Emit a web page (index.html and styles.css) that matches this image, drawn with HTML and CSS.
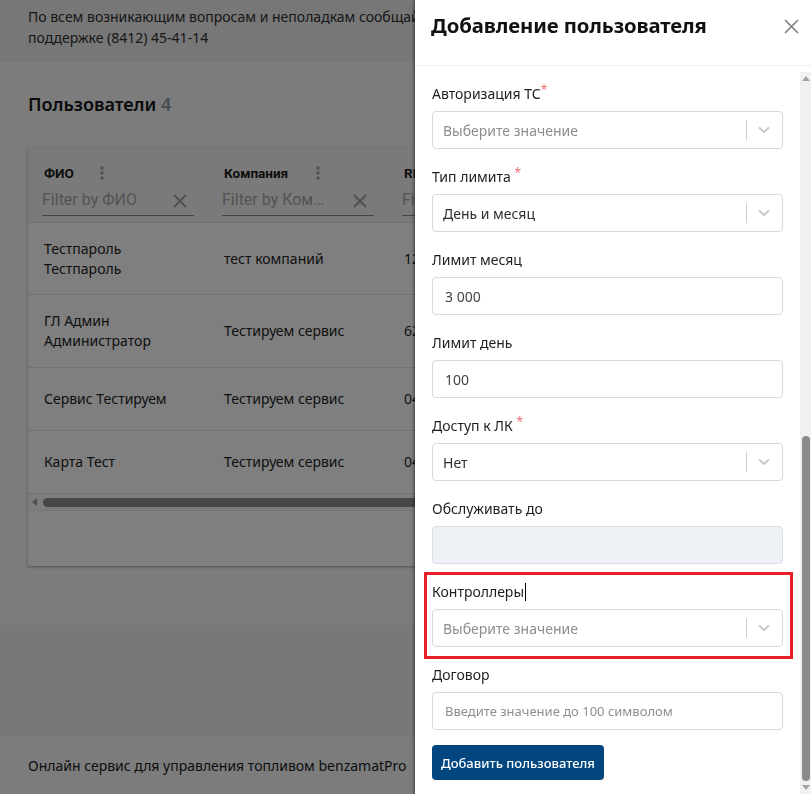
FILE: index.html
```html
<!DOCTYPE html>
<html lang="ru">
<head>
<meta charset="utf-8">
<title>Пользователи</title>
<link rel="stylesheet" href="styles.css">
</head>
<body>
<div class="page">
  <div class="notice">По всем возникающим вопросам и неполадкам сообщайте в службу технической<br>поддержке (8412) 45-41-14</div>
  <main class="main">
    <h2 class="page-title">Пользователи <span class="count">4</span></h2>
    <div class="card">
      <div class="thead">
        <div class="th">
          <div class="th-head"><span class="th-label">ФИО</span><svg class="kebab" width="4" height="14" viewBox="0 0 4 14"><circle cx="2" cy="2" r="1.7"/><circle cx="2" cy="7" r="1.7"/><circle cx="2" cy="12" r="1.7"/></svg></div>
          <div class="filter"><span class="filter-ph">Filter by ФИО</span><svg class="fx" width="14" height="14" viewBox="0 0 14 14"><path d="M1 1L13 13M13 1L1 13"/></svg></div>
        </div>
        <div class="th">
          <div class="th-head"><span class="th-label">Компания</span><svg class="kebab" width="4" height="14" viewBox="0 0 4 14"><circle cx="2" cy="2" r="1.7"/><circle cx="2" cy="7" r="1.7"/><circle cx="2" cy="12" r="1.7"/></svg></div>
          <div class="filter"><span class="filter-ph">Filter by Ком…</span><svg class="fx" width="14" height="14" viewBox="0 0 14 14"><path d="M1 1L13 13M13 1L1 13"/></svg></div>
        </div>
        <div class="th">
          <div class="th-head"><span class="th-label">RFID</span></div>
          <div class="filter"><span class="filter-ph">Filter by RFID</span></div>
        </div>
      </div>
      <div class="tr tall"><div class="td">Тестпароль<br>Тестпароль</div><div class="td">тест компаний</div><div class="td">1234567890</div></div>
      <div class="tr tall2"><div class="td">ГЛ Админ<br>Администратор</div><div class="td">Тестируем сервис</div><div class="td">6234567890</div></div>
      <div class="tr"><div class="td">Сервис Тестируем</div><div class="td">Тестируем сервис</div><div class="td">0434567890</div></div>
      <div class="tr"><div class="td">Карта Тест</div><div class="td">Тестируем сервис</div><div class="td">0434567891</div></div>
      <div class="hscroll"><span class="harrow"></span><span class="hthumb"></span></div>
    </div>
  </main>
  <div class="band"></div>
  <footer class="footer">Онлайн сервис для управления топливом benzamatPro</footer>
</div>

<div class="overlay"></div>

<aside class="drawer">
  <header class="drawer-head">
    <h1 class="drawer-title">Добавление пользователя</h1>
    <svg class="close" width="15" height="15" viewBox="0 0 15 15"><path d="M1 1L14 14M14 1L1 14"/></svg>
  </header>
  <div class="drawer-body">
    <form class="form">
      <div class="field">
        <label class="label">Авторизация ТС<span class="req">*</span></label>
        <div class="select"><span class="ph">Выберите значение</span><span class="sep"></span><svg class="chev" width="12" height="8" viewBox="0 0 12 8"><path d="M1 1.5L6 6L11 1.5"/></svg></div>
      </div>
      <div class="field">
        <label class="label">Тип лимита <span class="req">*</span></label>
        <div class="select"><span class="val">День и месяц</span><span class="sep"></span><svg class="chev" width="12" height="8" viewBox="0 0 12 8"><path d="M1 1.5L6 6L11 1.5"/></svg></div>
      </div>
      <div class="field">
        <label class="label">Лимит месяц</label>
        <div class="input"><span class="num">3 000</span></div>
      </div>
      <div class="field">
        <label class="label">Лимит день</label>
        <div class="input"><span class="num">100</span></div>
      </div>
      <div class="field">
        <label class="label">Доступ к ЛК <span class="req">*</span></label>
        <div class="select"><span class="val">Нет</span><span class="sep"></span><svg class="chev" width="12" height="8" viewBox="0 0 12 8"><path d="M1 1.5L6 6L11 1.5"/></svg></div>
      </div>
      <div class="field">
        <label class="label">Обслуживать до</label>
        <div class="input disabled"></div>
      </div>
      <div class="field highlight">
        <label class="label">Контроллеры<span class="caret"></span></label>
        <div class="select"><span class="ph">Выберите значение</span><span class="sep"></span><svg class="chev" width="12" height="8" viewBox="0 0 12 8"><path d="M1 1.5L6 6L11 1.5"/></svg></div>
      </div>
      <div class="field">
        <label class="label">Договор</label>
        <div class="input"><span class="ph small">Введите значение до 100 символом</span></div>
      </div>
      <button type="button" class="btn">Добавить пользователя</button>
    </form>
    <div class="vscroll">
      <span class="varrow up"></span>
      <span class="vtrack"><span class="vthumb"></span></span>
      <span class="varrow down"></span>
    </div>
  </div>
</aside>
</body>
</html>
```

FILE: styles.css
```css
* { box-sizing: border-box; }
html, body { margin: 0; padding: 0; }
body {
  width: 811px;
  height: 794px;
  overflow: hidden;
  font-family: "Noto Sans", "Open Sans", sans-serif;
  font-size: 14px;
  color: #282828;
  background: #f8f8f8;
}

.page {
  display: flex;
  flex-direction: column;
  width: 415px;
  height: 794px;
  overflow: hidden;
}

.notice {
  height: 62px;
  flex: none;
  background: #eeeeee;
  padding: 6px 28px 0;
  line-height: 21px;
  white-space: nowrap;
  overflow: hidden;
  color: #2e2e2e;
}

.main {
  height: 563px;
  flex: none;
  padding: 29px 0 0 28px;
  background: #f8f8f8;
  overflow: hidden;
}
.page-title {
  margin: 0 0 31px;
  font-size: 18px;
  font-weight: 600;
  line-height: 26px;
  color: #141414;
}
.count { color: #8c97ab; }

.card {
  width: 770px;
  height: 418px;
  background: #fff;
  border-radius: 2px;
  box-shadow: 0 1px 3px rgba(0,0,0,0.35);
  display: flex;
  flex-direction: column;
  overflow: hidden;
}
.thead {
  display: flex;
  height: 75px;
  flex: none;
  background: #f5f5f5;
  border-bottom: 1px solid #e4e4e4;
}
.th { width: 180px; flex: none; padding: 16px 0 0 14px; }
.th-head { display: flex; align-items: center; height: 18px; padding-left: 2px; }
.th-label {
  font-family: Roboto, "Noto Sans", sans-serif;
  font-weight: 700;
  font-size: 13.5px;
  color: #1a1a1a;
  width: 56px;
}
.th:nth-child(2) .th-label { width: 92px; }
.kebab { fill: #a0a0a0; }
.filter {
  margin-top: 5px;
  width: 152px;
  height: 29px;
  border-bottom: 1px solid #8a8a8a;
  display: flex;
  align-items: flex-start;
  justify-content: space-between;
  padding: 3px 7px 0 0;
}
.filter-ph {
  font-family: Roboto, sans-serif;
  font-size: 16px;
  line-height: 20px;
  color: #a6a6a6;
  white-space: nowrap;
}
.fx { stroke: #9e9e9e; stroke-width: 1.8; fill: none; margin-top: 4px; }

.tr {
  display: flex;
  height: 63px;
  flex: none;
  border-bottom: 1px solid #e4e4e4;
}
.tr.tall { height: 72px; }
.tr.tall2 { height: 73px; }
.td {
  width: 180px;
  flex: none;
  padding: 0 16px;
  display: flex;
  align-items: center;
  line-height: 20px;
  color: #232323;
}

.hscroll {
  height: 17px;
  flex: none;
  display: flex;
  align-items: center;
  gap: 6px;
  padding-left: 4px;
  background: #fafafa;
  border-bottom: 1px solid #eeeeee;
}
.harrow {
  width: 0; height: 0;
  border-top: 4px solid transparent;
  border-bottom: 4px solid transparent;
  border-right: 5px solid #a0a0a0;
}
.hthumb {
  width: 700px;
  height: 9px;
  border-radius: 5px;
  background: #8f8f8f;
}

.band { height: 112px; flex: none; background: #f0f0f0; }
.footer {
  flex: 1;
  background: #f8f8f8;
  padding: 19px 0 0 28px;
  line-height: 20px;
  white-space: nowrap;
  color: #1c1c1c;
}

.overlay {
  position: fixed;
  inset: 0;
  background: rgba(0,0,0,0.5);
}

.drawer {
  position: fixed;
  top: 0; right: 0;
  width: 396px;
  height: 794px;
  background: #fff;
  box-shadow: -1px 0 3px rgba(0,0,0,0.5);
  display: flex;
  flex-direction: column;
}
.drawer-head {
  height: 66px;
  flex: none;
  border-bottom: 1px solid #efefef;
  display: flex;
  align-items: flex-start;
  justify-content: space-between;
  padding: 9px 12px 0 16px;
}
.drawer-title {
  margin: 0;
  font-size: 20.3px;
  font-weight: 700;
  line-height: 32px;
  color: #111;
  letter-spacing: -0.1px;
}
.close { stroke: #7a7a7a; stroke-width: 1.5; fill: none; margin-top: 10px; }

.drawer-body { flex: 1; display: flex; min-height: 0; }
.form {
  flex: 1;
  padding: 18px 17px 0;
  display: flex;
  flex-direction: column;
}
.field { display: flex; flex-direction: column; margin-bottom: 18px; }
.label {
  display: block;
  line-height: 20px;
  height: 20px;
  margin-bottom: 7px;
  color: #1e1e1e;
  white-space: pre;
}
.req {
  color: #ec6b74;
  font-size: 12px;
  line-height: 0;
  vertical-align: 5px;
}
.caret {
  display: inline-block;
  width: 1px;
  height: 18px;
  background: #000;
  margin-left: 1px;
  vertical-align: -4px;
}

.select, .input {
  height: 38px;
  border: 1px solid #d6d9de;
  border-radius: 4px;
  display: flex;
  align-items: center;
}
.select { padding-left: 10px; }
.input { padding-left: 12px; }
.select > span:first-child { flex: 1; }
.ph { color: #8e8e8e; }
.ph.small { font-size: 13px; }
.val { color: #2e2e2e; }
.num { color: #444; }
.sep { width: 1px; height: 20px; background: #d0d0d0; }
.chev { stroke: #c8c8c8; stroke-width: 2; fill: none; margin: 0 12px 0 11px; }
.input.disabled { background: #eef1f6; border-color: #d9dde4; }

.highlight {
  border: 3px solid #e52029;
  margin: -10px -10px 6px -8px;
  padding: 7px 7px 9px 5px;
}

.btn {
  align-self: flex-start;
  margin-top: -3px;
  width: 172px;
  height: 35px;
  border: none;
  border-radius: 4px;
  background: #024680;
  color: #fff;
  font-family: "Noto Sans", sans-serif;
  font-size: 13px;
  font-weight: 500;
}

.vscroll {
  width: 11px;
  flex: none;
  margin-top: 6px;
  background: #f1f1f1;
  display: flex;
  flex-direction: column;
  align-items: center;
}
.varrow { width: 0; height: 0; border-left: 4px solid transparent; border-right: 4px solid transparent; margin: 4px 0; }
.varrow.up { border-bottom: 5px solid #a3a3a3; }
.varrow.down { border-top: 5px solid #a3a3a3; }
.vtrack { flex: 1; width: 100%; display: flex; flex-direction: column; justify-content: flex-end; padding: 0 1px 0 2px; }
.vthumb { height: 345px; border-radius: 4px; background: #8a8a8a; }
```
